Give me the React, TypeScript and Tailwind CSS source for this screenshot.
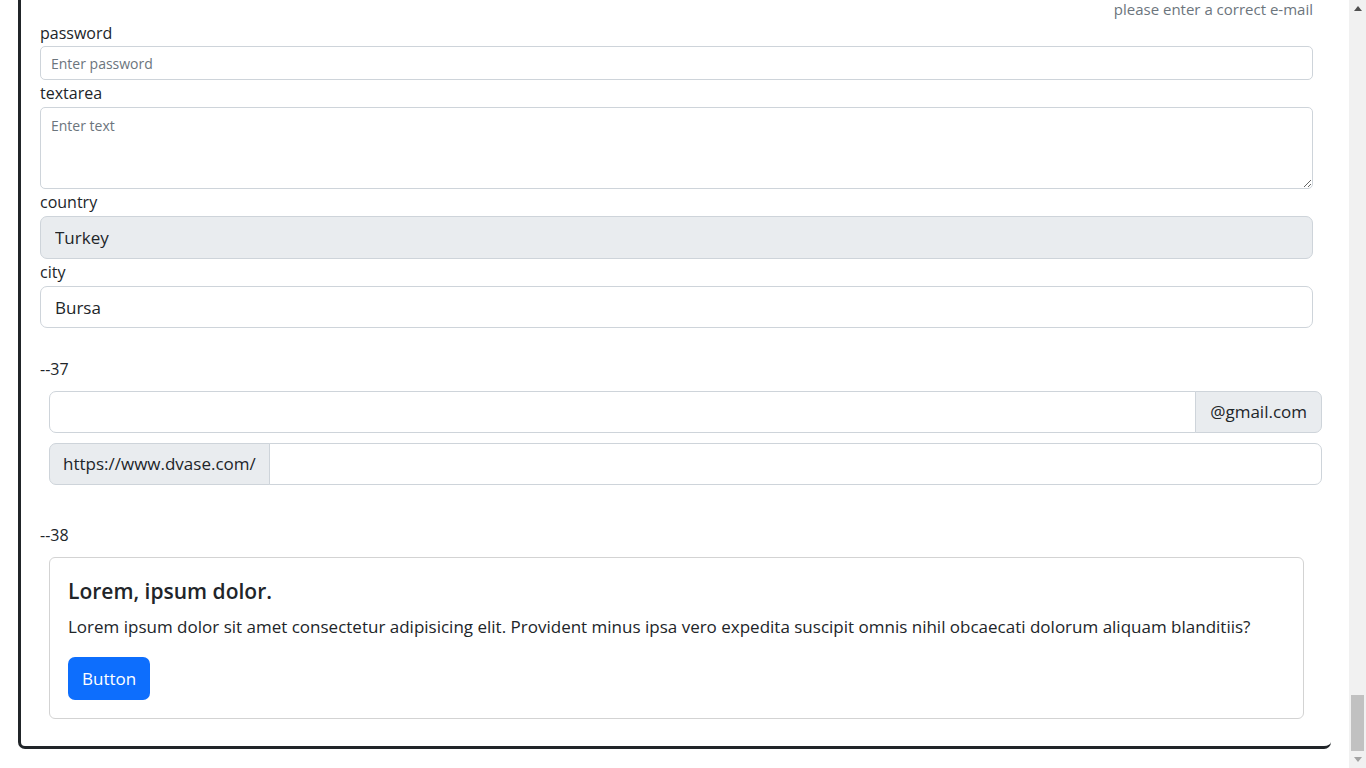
import React from 'react';

const font = { fontFamily: '"Open Sans", "Liberation Sans", sans-serif' };

const Label: React.FC<{ text: string; className?: string }> = ({ text, className }) => (
  <div className={`h-[24px] text-[16px] leading-[23px] text-[#212529] ${className || ''}`}>{text}</div>
);

const Scrollbar: React.FC = () => (
  <div className="w-[17px] h-full bg-[#f1f1f1] flex flex-col shrink-0">
    <div className="h-[17px] flex items-center justify-center">
      <svg width="8" height="5" viewBox="0 0 8 5">
        <polygon points="0,5 4,0 8,5" fill="#505050" />
      </svg>
    </div>
    <div className="flex-1 flex flex-col justify-end items-center">
      <div className="w-[13px] h-[56px] bg-[#c1c1c1]"></div>
    </div>
    <div className="h-[17px] flex items-center justify-center">
      <svg width="8" height="5" viewBox="0 0 8 5">
        <polygon points="0,0 8,0 4,5" fill="#a3a3a3" />
      </svg>
    </div>
  </div>
);

export default function App() {
  return (
    <div className="flex h-[768px] overflow-hidden bg-white" style={font}>
      <div className="flex-1 min-w-0">
        <div className="ml-[18px] w-[1313px] border-l-[3px] border-b-[3px] border-[#212529] rounded-bl-[7px] rounded-br-[7px] pl-[19px] pr-[18px] pb-[27px]">
          {/* form section */}
          <div className="h-[19px] text-right text-[15px] leading-[18px] text-[#6c757d]">
            please enter a correct e-mail
          </div>

          <Label text="password" className="mt-[3px]" />
          <input
            type="password"
            placeholder="Enter password"
            className="block w-full h-[34px] px-[10px] text-[14px] text-[#212529] placeholder:text-[#6c757d] border border-[#ced4da] rounded-[5px] outline-none"
          />

          <Label text="textarea" className="mt-[2px]" />
          <textarea
            placeholder="Enter text"
            className="block mt-[1px] w-full h-[82px] px-[10px] py-[7px] text-[14px] leading-[21px] text-[#212529] placeholder:text-[#6c757d] border border-[#ced4da] rounded-[5px] outline-none"
          ></textarea>

          <Label text="country" className="mt-[2px]" />
          <input
            readOnly
            defaultValue="Turkey"
            className="block mt-[1px] w-full h-[43px] px-[14px] text-[17px] text-[#212529] bg-[#e9ecef] border border-[#ced4da] rounded-[7px] outline-none"
          />

          <Label text="city" className="mt-[2px]" />
          <input
            defaultValue="Bursa"
            className="block mt-[1px] w-full h-[42px] px-[14px] text-[17px] text-[#212529] bg-white border border-[#ced4da] rounded-[7px] outline-none"
          />

          {/* --37 input groups */}
          <Label text="--37" className="mt-[30px]" />
          <div className="ml-[9px] -mr-[9px] mt-[9px] flex flex-col gap-[10px]">
            <div className="flex h-[42px]">
              <input className="flex-1 min-w-0 h-full px-[12px] text-[17px] border border-[#ced4da] rounded-l-[7px] outline-none" />
              <span className="-ml-px flex items-center px-[14px] text-[17px] text-[#212529] bg-[#e9ecef] border border-[#ced4da] rounded-r-[7px]">
                @gmail.com
              </span>
            </div>
            <div className="flex h-[42px]">
              <span className="flex items-center px-[13px] text-[17px] text-[#212529] bg-[#e9ecef] border border-[#ced4da] rounded-l-[7px]">
                https://www.dvase.com/
              </span>
              <input className="-ml-px flex-1 min-w-0 h-full px-[12px] text-[17px] border border-[#ced4da] rounded-r-[7px] outline-none" />
            </div>
          </div>

          {/* --38 card */}
          <Label text="--38" className="mt-[39px]" />
          <div className="ml-[9px] w-[1255px] mt-[9px] border border-[#d3d3d3] rounded-[6px] p-[18px]">
            <h5 className="text-[21px] leading-[30px] font-semibold text-[#212529]">Lorem, ipsum dolor.</h5>
            <p className="mt-[9px] text-[17px] leading-[24px] text-[#212529]">
              Lorem ipsum dolor sit amet consectetur adipisicing elit. Provident minus ipsa vero expedita suscipit omnis nihil obcaecati dolorum aliquam blanditiis?
            </p>
            <button className="mt-[18px] h-[43px] px-[14px] text-[17px] text-white bg-[#0d6efd] rounded-[7px]">
              Button
            </button>
          </div>
        </div>
      </div>
      <Scrollbar />
    </div>
  );
}
